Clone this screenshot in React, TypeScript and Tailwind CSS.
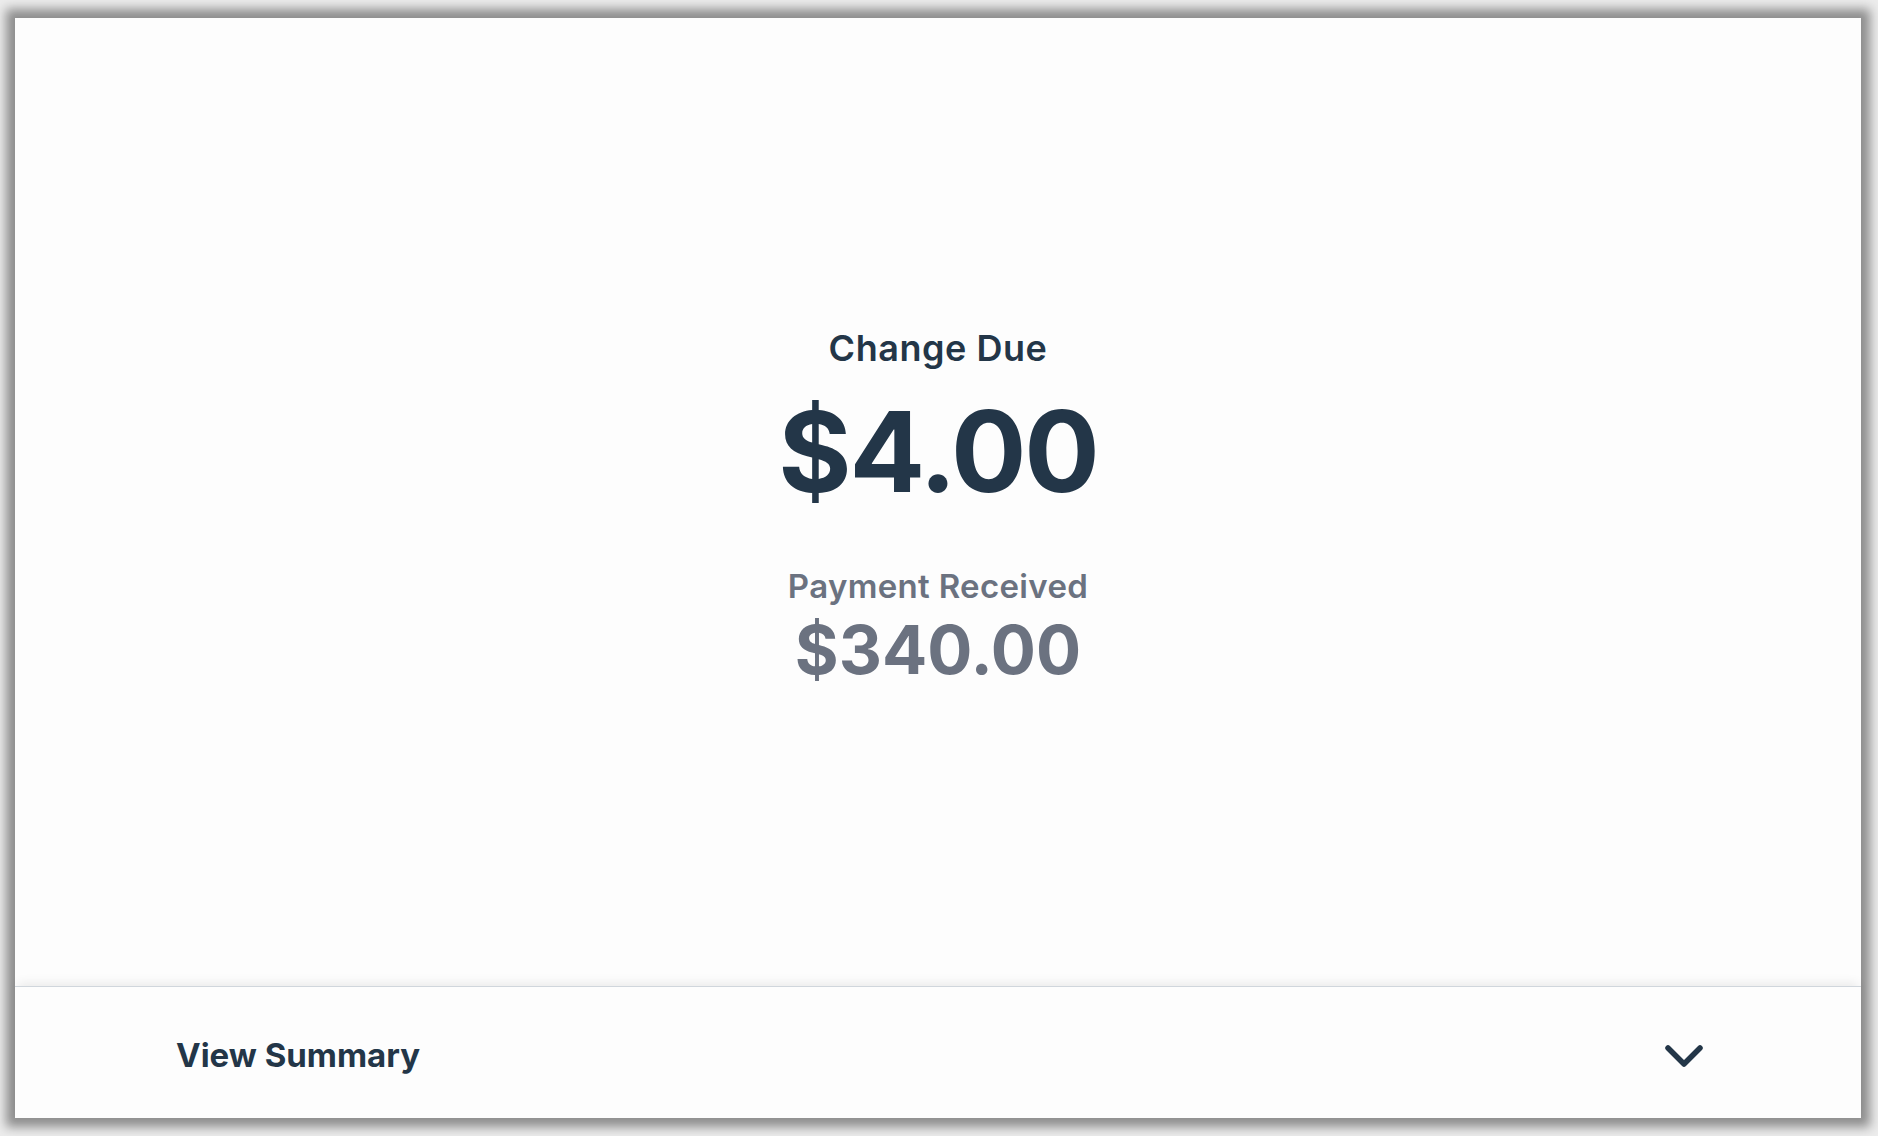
const font = { fontFamily: 'Inter, "Noto Sans", sans-serif' };

const PaymentComplete = () => {
  return (
    <div className="flex-1 flex items-center justify-center pt-[9px]">
      <div className="flex flex-col items-center text-center">
        <h2 className="text-[36px] leading-none font-semibold tracking-[0.015em] text-[#233648]">Change Due</h2>
        <p className="mt-[29px] text-[112px] leading-none font-bold tracking-[-0.02em] text-[#233648]">$4.00</p>
        <h3 className="mt-[63px] text-[33px] leading-none font-semibold tracking-[0.01em] text-[#6b7280]">Payment Received</h3>
        <p className="mt-[13px] text-[67px] leading-none font-bold text-[#6b7280]">$340.00</p>
      </div>
    </div>
  );
};

export default function App() {
  return (
    <div className="w-full h-screen bg-[#ececec] pt-[18px] pl-[15px] pr-[17px] pb-[18px]" style={font}>
      <div className="h-full flex flex-col bg-[#fdfdfd] shadow-[0_0_10px_9px_rgba(0,0,0,0.4)]">
        <PaymentComplete />
        <button className="h-[132px] w-full flex items-center justify-between pl-[161px] pr-[158px] pt-[5px] border-t border-[#d0d6dc] bg-[#fdfdfd] shadow-[0_-6px_10px_-3px_rgba(0,0,0,0.08)]">
          <span className="text-[33px] leading-none font-bold text-[#233648]">View Summary</span>
          <svg width="38" height="24" viewBox="0 0 38 24" fill="none" className="mt-[2px] text-[#233648]">
            <polyline points="3,4 19,20 35,4" stroke="currentColor" strokeWidth="5.5" strokeLinecap="round" strokeLinejoin="round" />
          </svg>
        </button>
      </div>
    </div>
  );
}
